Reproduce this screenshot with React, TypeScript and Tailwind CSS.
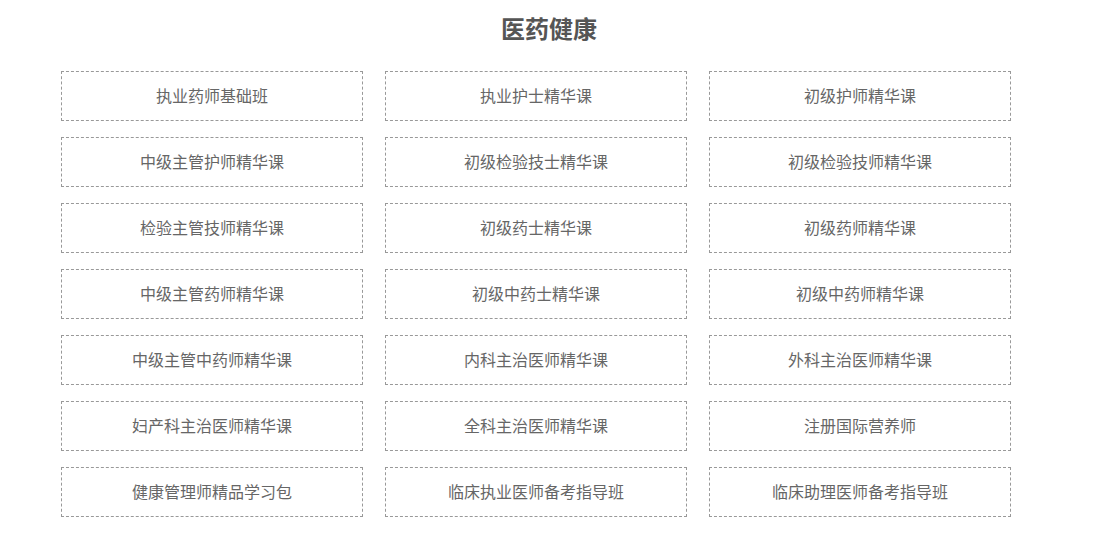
import React from "react";

const items = [
  "执业药师基础班", "执业护士精华课", "初级护师精华课",
  "中级主管护师精华课", "初级检验技士精华课", "初级检验技师精华课",
  "检验主管技师精华课", "初级药士精华课", "初级药师精华课",
  "中级主管药师精华课", "初级中药士精华课", "初级中药师精华课",
  "中级主管中药师精华课", "内科主治医师精华课", "外科主治医师精华课",
  "妇产科主治医师精华课", "全科主治医师精华课", "注册国际营养师",
  "健康管理师精品学习包", "临床执业医师备考指导班", "临床助理医师备考指导班",
];

export default function App() {
  return (
    <div className="w-[1098px] h-[545px] bg-white overflow-hidden" style={{ fontFamily: '"Microsoft YaHei", "Noto Sans CJK SC", sans-serif' }}>
      <h2 className="text-center text-[24px] font-bold text-[#555] leading-[30px] pt-[13px]">医药健康</h2>
      <div className="ml-[61px] mt-[28px] w-[950px] grid grid-cols-3 gap-x-[22px] gap-y-[16px]">
        {items.map((t) => (
          <div key={t} className="h-[50px] pb-[2px] border border-dashed border-[#999] flex items-center justify-center text-[16px] text-[#666]">
            {t}
          </div>
        ))}
      </div>
    </div>
  );
}
